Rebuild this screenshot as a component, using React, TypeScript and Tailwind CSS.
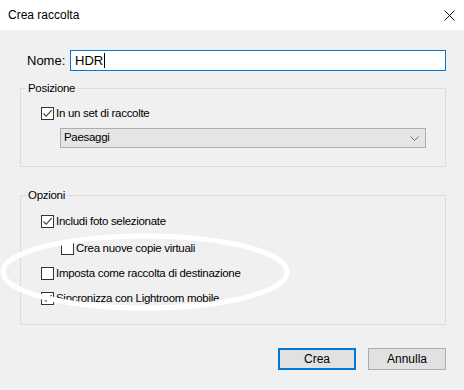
import React from 'react';

/**
 * Crea raccolta — Lightroom "create collection" dialog (Windows 10 chrome)
 * with a hand-drawn white ellipse annotation over the options group.
 */

function CheckBox({checked}: {checked?: boolean}) {
  return (
    <span className="flex h-[13px] w-[13px] shrink-0 items-center justify-center border border-[#333333] bg-white">
      {checked && (
        <svg width="11" height="11" viewBox="0 0 11 11" fill="none" aria-hidden="true">
          <polyline points="1.5 5.5 4.2 8.3 9.6 2.2" stroke="#333333" strokeWidth="1.1" />
        </svg>
      )}
    </span>
  );
}

function CheckRow({label, checked, indent, className}: {label: string; checked?: boolean; indent?: boolean; className?: string}) {
  return (
    <div className={`flex h-[25px] items-center gap-[2px] ${indent ? 'pl-[40px]' : 'pl-[20px]'} ${className ?? ''}`}>
      <CheckBox checked={checked} />
      <span>{label}</span>
    </div>
  );
}

function Group({title, children, className}: {title: string; children: React.ReactNode; className?: string}) {
  return (
    <fieldset className={`border border-[#dcdcdc] ${className ?? ''}`}>
      <legend className="ml-[5px] px-[2px] leading-[14px]">{title}</legend>
      {children}
    </fieldset>
  );
}

export default function App() {
  return (
    <div
      className="relative h-[390px] w-[464px] overflow-hidden bg-[#f0f0f0] text-[11.5px] tracking-[-0.3px] text-black"
      style={{fontFamily: '"Liberation Sans", Arial, sans-serif'}}
    >
      {/* ── Title bar ─────────────────────────────────────────── */}
      <div className="flex h-[30px] items-center justify-between bg-white pl-[8px] pr-[8px]">
        <span className="text-[12px] tracking-normal">Crea raccolta</span>
        <svg width="11" height="11" viewBox="0 0 11 11" className="mr-[1px]" aria-hidden="true">
          <path d="M0.5 0.5 L10.5 10.5 M10.5 0.5 L0.5 10.5" stroke="#111" strokeWidth="1" />
        </svg>
      </div>

      {/* ── Body ──────────────────────────────────────────────── */}
      <div className="flex flex-col pl-[20px] pr-[18px]">
        <div className="mt-[20px] flex h-[21px] items-center">
          <span className="pl-[7px] text-[13px] tracking-normal">Nome:</span>
          <div className="ml-auto flex h-[21px] w-[376px] items-center border border-[#0078d7] bg-white pl-[4px] text-[13px] tracking-normal">
            HDR
            <span className="ml-[1px] h-[15px] w-px bg-black" />
          </div>
        </div>

        <Group title="Posizione" className="mt-[10px] h-[86px]">
          <div className="mt-[6px]">
            <CheckRow label="In un set di raccolte" checked />
          </div>
          <div className="ml-[39px] mr-[19px] mt-[2px] flex h-[20px] items-center justify-between border border-[#adadad] bg-[#e5e5e5] pl-[3px] pr-[6px]">
            <span>Paesaggi</span>
            <svg width="9" height="5" viewBox="0 0 9 5" fill="none" aria-hidden="true">
              <polyline points="0.5 0.5 4.5 4.5 8.5 0.5" stroke="#707070" strokeWidth="1" />
            </svg>
          </div>
        </Group>

        <Group title="Opzioni" className="mt-[21px] h-[137px]">
          <div className="mt-[7px] flex flex-col">
            <CheckRow label="Includi foto selezionate" checked />
            <CheckRow label="Crea nuove copie virtuali" indent className="mt-[2px]" />
            <CheckRow label="Imposta come raccolta di destinazione" />
            <CheckRow label="Sincronizza con Lightroom mobile" checked />
          </div>
        </Group>

        <div className="mt-[23px] flex justify-end gap-[12px]">
          <button className="h-[22px] w-[78px] border-2 border-[#0078d7] bg-[#e1e1e1] text-[12px] tracking-normal">Crea</button>
          <button className="h-[22px] w-[78px] border border-[#adadad] bg-[#e1e1e1] text-[12px] tracking-normal">Annulla</button>
        </div>
      </div>

      {/* ── Annotation ellipse drawn over the screenshot ──────── */}
      <svg
        className="pointer-events-none absolute left-0 top-0"
        width="464"
        height="390"
        viewBox="0 0 464 390"
        aria-hidden="true"
      >
        <ellipse cx="145" cy="272" rx="142" ry="36" fill="none" stroke="#ffffff" strokeWidth="5" />
      </svg>
    </div>
  );
}
